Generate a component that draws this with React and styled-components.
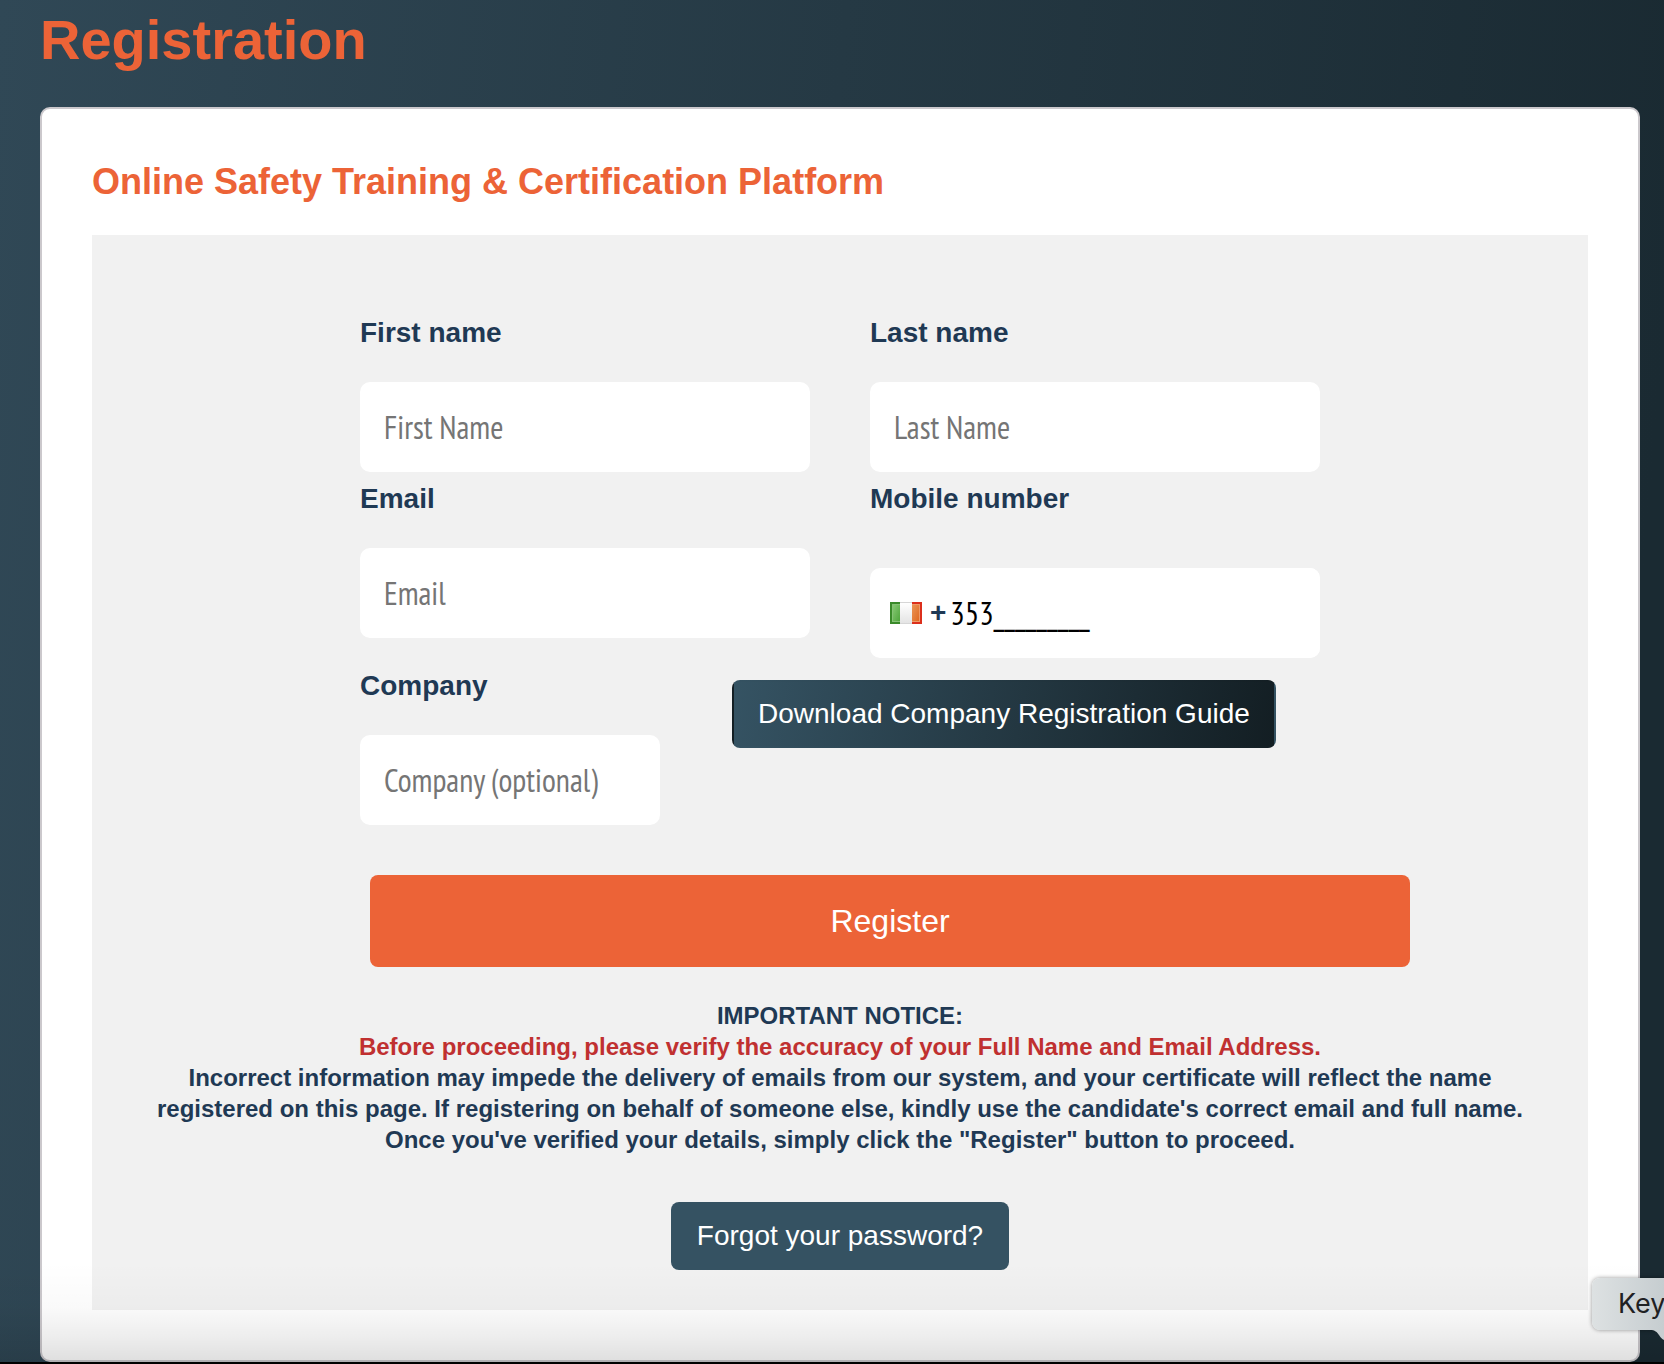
import React, { useState } from "react";
import styled, { createGlobalStyle, ThemeProvider } from "styled-components";

const theme = {
  orange: "#ec6337",
  navy: "#1f3954",
  slate: "#355262",
  red: "#c03030",
  panel: "#f1f1f1",
  placeholder: "#757575",
  border: "#cbc8cc",
  sans: '"Liberation Sans", Arial, sans-serif',
  narrow: '"PT Sans Narrow", "Liberation Sans Narrow", "Open Sans", sans-serif'
};

const GlobalStyle = createGlobalStyle`
  * {
    box-sizing: border-box;
  }

  body {
    margin: 0;
    background: #000;
    overflow-x: hidden;
  }
`;

const Page = styled.main`
  position: relative;
  padding: 8px 24px 0 40px;
  margin-bottom: 2px;
  overflow: hidden;
  font-family: ${props => props.theme.sans};
  color: ${props => props.theme.navy};
  background: linear-gradient(95deg, #304856 0%, #1a2a32 95%);
`;

const Title = styled.h1`
  margin: 0 0 35px;
  font-size: 56px;
  line-height: 64px;
  color: ${props => props.theme.orange};
`;

const Card = styled.section`
  padding: 50px;
  background: #fff;
  border: 2px solid ${props => props.theme.border};
  border-radius: 10px;
`;

const Subtitle = styled.h2`
  margin: 0 0 30px;
  font-size: 36px;
  line-height: 46px;
  color: ${props => props.theme.orange};
`;

const Panel = styled.div`
  padding: 82px 48px 40px;
  background: ${props => props.theme.panel};
`;

const Form = styled.form`
  max-width: 960px;
  margin: 0 auto;
`;

const Fields = styled.div`
  display: grid;
  grid-template-columns: 1fr 1fr;
  gap: 11px 60px;
`;

const Field = styled.div`
  display: flex;
  flex-direction: column;
  gap: ${props => (props.$loose ? "53px" : "33px")};
`;

const CompanyRow = styled.div`
  display: flex;
  align-items: flex-start;
  gap: 72px;
  margin-top: 12px;

  ${Field} {
    width: 300px;
  }
`;

const Label = styled.label`
  font-size: 28px;
  font-weight: bold;
  line-height: 32px;
`;

const TextInput = styled.input`
  width: 100%;
  height: 90px;
  padding: 0 24px;
  border: 0;
  border-radius: 10px;
  background: #fff;
  color: #000;
  font-family: ${props => props.theme.narrow};
  font-size: 32px;

  &::placeholder {
    color: ${props => props.theme.placeholder};
    opacity: 1;
  }
`;

const PhoneBox = styled.div`
  display: flex;
  align-items: center;
  height: 90px;
  padding-left: 20px;
  border-radius: 10px;
  background: #fff;

  ${TextInput} {
    flex: 1;
    min-width: 0;
    padding: 0 4px;
  }
`;

const Prefix = styled.span`
  margin-left: 8px;
  font-size: 28px;
  font-weight: bold;
  line-height: 32px;
`;

const Button = styled.button`
  height: 68px;
  padding: 0 24px;
  border: 2px solid transparent;
  border-radius: 8px;
  background: ${props => props.theme.slate};
  color: #fff;
  font-family: inherit;
  font-size: 28px;
  white-space: nowrap;
  cursor: pointer;
`;

const GuideButton = styled(Button)`
  margin-top: 10px;
  background: linear-gradient(100deg, #355363, #131e23);
`;

const RegisterButton = styled(Button)`
  display: block;
  width: calc(100% + 80px);
  height: 92px;
  margin: 50px 0 0 10px;
  background: ${props => props.theme.orange};
  font-size: 32px;
`;

const Notice = styled.p`
  margin: 33px 0 47px;
  font-size: 24px;
  font-weight: bold;
  line-height: 31px;
  text-align: center;
`;

const Warning = styled.span`
  color: ${props => props.theme.red};
`;

const Actions = styled.div`
  display: flex;
  justify-content: center;
`;

const BottomShade = styled.div`
  position: absolute;
  right: 0;
  bottom: 0;
  left: 0;
  height: 100px;
  pointer-events: none;
  background: linear-gradient(
    rgba(0, 0, 0, 0),
    rgba(0, 0, 0, 0.02) 45%,
    rgba(0, 0, 0, 0.07) 75%,
    rgba(0, 0, 0, 0.13)
  );
`;

const Tooltip = styled.div`
  position: absolute;
  right: 0;
  bottom: 32px;
  width: 72px;
  height: 52px;
  padding-left: 26px;
  border-radius: 8px 0 0 8px;
  background: linear-gradient(90deg, #dde1e2, #c6cdd0);
  box-shadow: 0 0 4px rgba(0, 0, 0, 0.4);
  color: #1f2123;
  font-family: Inter, sans-serif;
  font-size: 27px;
  line-height: 52px;
`;

const TooltipTail = styled.svg`
  position: absolute;
  top: 100%;
  right: 0;
  display: block;
`;

const IrishFlag = () => (
  <svg width="32" height="22" viewBox="0 0 32 22" aria-label="Ireland">
    <defs>
      <linearGradient id="green" x2="1" y2="1">
        <stop offset="0" stopColor="#86c873" />
        <stop offset="1" stopColor="#4fa53c" />
      </linearGradient>
      <linearGradient id="white" x2="0" y2="1">
        <stop offset="0" stopColor="#fff" />
        <stop offset="1" stopColor="#e4e4e4" />
      </linearGradient>
      <linearGradient id="orange" x2="1" y2="1">
        <stop offset="0" stopColor="#ea9455" />
        <stop offset="1" stopColor="#e06a22" />
      </linearGradient>
    </defs>
    <rect width="11" height="22" fill="#3a8a2a" />
    <rect x="10" width="12" height="22" fill="#d6d6d6" />
    <rect x="22" width="10" height="22" fill="#dc2f1c" />
    <rect x="2" y="2" width="8" height="18" fill="#86c276" />
    <rect x="3" y="3" width="7" height="16" fill="url(#green)" />
    <rect x="10" y="1" width="12" height="20" fill="url(#white)" />
    <rect x="22" y="2" width="8" height="18" fill="#ee9a68" />
    <rect x="22" y="3" width="7" height="16" fill="url(#orange)" />
  </svg>
);

const App = () => {
  const [phone, setPhone] = useState("353_________");

  return (
    <ThemeProvider theme={theme}>
      <GlobalStyle />
      <Page>
        <Title>Registration</Title>
        <Card>
          <Subtitle>Online Safety Training &amp; Certification Platform</Subtitle>
          <Panel>
            <Form onSubmit={e => e.preventDefault()}>
              <Fields>
                <Field>
                  <Label htmlFor="first-name">First name</Label>
                  <TextInput id="first-name" placeholder="First Name" />
                </Field>
                <Field>
                  <Label htmlFor="last-name">Last name</Label>
                  <TextInput id="last-name" placeholder="Last Name" />
                </Field>
                <Field>
                  <Label htmlFor="email">Email</Label>
                  <TextInput id="email" type="email" placeholder="Email" />
                </Field>
                <Field $loose>
                  <Label htmlFor="mobile">Mobile number</Label>
                  <PhoneBox>
                    <IrishFlag />
                    <Prefix>+</Prefix>
                    <TextInput
                      id="mobile"
                      type="tel"
                      value={phone}
                      onChange={e => setPhone(e.target.value)}
                    />
                  </PhoneBox>
                </Field>
              </Fields>
              <CompanyRow>
                <Field>
                  <Label htmlFor="company">Company</Label>
                  <TextInput id="company" placeholder="Company (optional)" />
                </Field>
                <GuideButton type="button">
                  Download Company Registration Guide
                </GuideButton>
              </CompanyRow>
              <RegisterButton type="submit">Register</RegisterButton>
            </Form>
            <Notice>
              IMPORTANT NOTICE:
              <br />
              <Warning>
                Before proceeding, please verify the accuracy of your Full Name
                and Email Address.
              </Warning>
              <br />
              Incorrect information may impede the delivery of emails from our
              system, and your certificate will reflect the name registered on
              this page. If registering on behalf of someone else, kindly use
              the candidate's correct email and full name.
              <br />
              Once you've verified your details, simply click the "Register"
              button to proceed.
            </Notice>
            <Actions>
              <Button type="button">Forgot your password?</Button>
            </Actions>
          </Panel>
        </Card>
        <BottomShade />
        <Tooltip>
          Key
          <TooltipTail width="14" height="10" viewBox="0 0 14 10">
            <path d="M0 0C5 0 7 2 9 5C11 8 12 9 14 10V0Z" fill="#c8ced1" />
          </TooltipTail>
        </Tooltip>
      </Page>
    </ThemeProvider>
  );
};

export default App;
